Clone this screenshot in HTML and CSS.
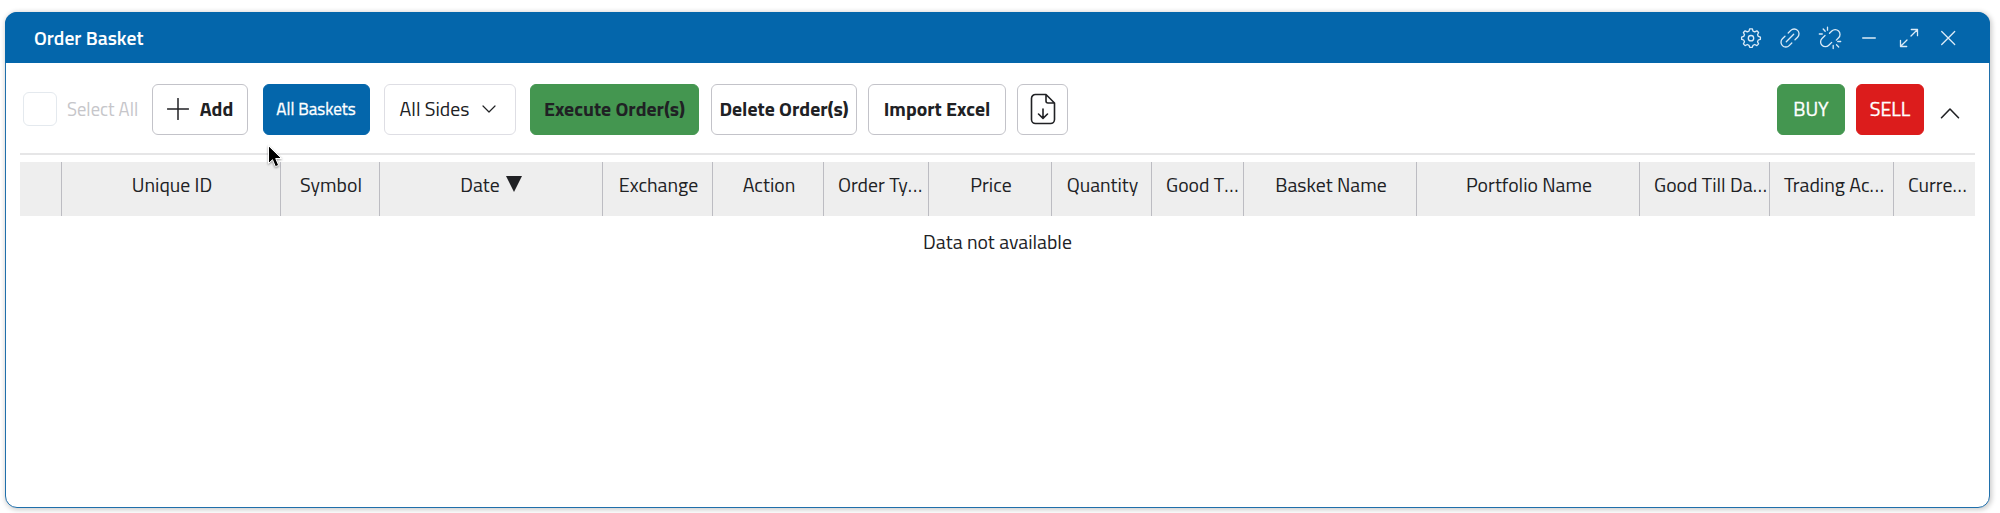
FILE: index.html
```
<!DOCTYPE html>
<html lang="en">
<head>
<meta charset="utf-8">
<title>Order Basket</title>
<link rel="stylesheet" href="styles.css">
</head>
<body>
<section class="window">
  <header class="titlebar">
    <h1 class="title">Order Basket</h1>
    <div class="window-actions">
      <svg class="icon" viewBox="0 0 24 24"><path d="M10.700 2.800h2.600l.7 2.300 1.700.8 2.200-1.100 1.700 1.700-1.100 2.200.8 1.700 2.100.7v2.200l-2.100.7-.8 1.700 1.100 2.200-1.700 1.700-2.200-1.100-1.700.8-.7 2.100h-2.600l-.7-2.100-1.700-.8-2.200 1.100-1.700-1.700 1.100-2.200-.8-1.700-2.100-.7v-2.200l2.100-.7.8-1.700-1.100-2.200 1.700-1.700 2.200 1.100 1.700-.8z"/><circle cx="12" cy="12.200" r="2.700"/></svg>
      <svg class="icon" viewBox="0 0 24 24"><path d="M8.300 15.700l7.400-7.400M10.200 7l2.600-2.600a4.800 4.800 0 0 1 6.800 6.800L17 13.800M7 10.200l-2.600 2.600a4.800 4.800 0 0 0 6.800 6.800l2.600-2.600"/></svg>
      <svg class="icon" viewBox="0 0 24 24"><path d="M11.500 7.300l2.300-2.300a4.800 4.800 0 0 1 6.800 6.800l-2.300 2.300M7 9.500l-3 3a4.800 4.800 0 0 0 6.800 6.800l2.900-2.900M5.200 3l2 2.300M9.500 1.200v3M1.300 8h3M22.700 15.500h-3M18.500 18.800l2.200 2.200M15.200 19.500v3"/></svg>
      <svg class="icon" viewBox="0 0 24 24"><path d="M5.700 12h12.600"/></svg>
      <svg class="icon" viewBox="0 0 24 24"><path d="M14 10l6.300-6.300M14.300 3.500h6.200v6.200M10 14l-6.300 6.300M3.500 14.300v6.200h6.200"/></svg>
      <svg class="icon" viewBox="0 0 24 24"><path d="M5.700 5.500l13 13M18.700 5.500l-13 13"/></svg>
    </div>
  </header>

  <div class="toolbar">
    <label class="select-all"><span class="checkbox"></span><span>Select All</span></label>
    <button class="btn btn-add"><svg class="plus" viewBox="0 0 22 22"><path d="M11 .5v21M.5 11h21"/></svg><span>Add</span></button>
    <button class="btn btn-baskets">All Baskets</button>
    <button class="btn btn-sides"><span>All Sides</span><svg class="chevron" viewBox="0 0 14 8"><path d="M1 1l6 6 6-6"/></svg></button>
    <button class="btn btn-execute">Execute Order(s)</button>
    <button class="btn btn-delete">Delete Order(s)</button>
    <button class="btn btn-import">Import Excel</button>
    <button class="btn btn-export"><svg class="file" viewBox="0 0 26 32"><path d="M16 1.500H5.500a4 4 0 0 0-4 4v21a4 4 0 0 0 4 4h15a4 4 0 0 0 4-4V10zM16 1.500V8a2 2 0 0 0 2 2h6.500M13 16v9M8.500 21l4.500 4.300 4.500-4.300"/></svg></button>
    <div class="trade">
      <button class="btn btn-buy">BUY</button>
      <button class="btn btn-sell">SELL</button>
      <svg class="collapse" viewBox="0 0 20 12"><path d="M1.500 10.700L10 2l8.500 8.700"/></svg>
    </div>
  </div>

  <div class="orders">
    <div class="columns">
      <div class="col"></div>
      <div class="col">Unique ID</div>
      <div class="col">Symbol</div>
      <div class="col date">Date<svg class="sort" viewBox="0 0 16 16"><path d="M0 0h16L8 16z"/></svg></div>
      <div class="col">Exchange</div>
      <div class="col">Action</div>
      <div class="col cut">Order Ty<span class="dots">...</span></div>
      <div class="col">Price</div>
      <div class="col">Quantity</div>
      <div class="col cut">Good T<span class="dots">...</span></div>
      <div class="col">Basket Name</div>
      <div class="col">Portfolio Name</div>
      <div class="col cut">Good Till Da<span class="dots">...</span></div>
      <div class="col cut">Trading Ac<span class="dots">...</span></div>
      <div class="col cut">Curre<span class="dots">...</span></div>
    </div>
    <p class="empty">Data not available</p>
  </div>
  <svg class="cursor" viewBox="0 0 16 24"><path d="M1.500 1v17.500l4-3.800 2.900 7 3.300-1.400-3-6.800h5.500z"/></svg>
</section>
</body>
</html>
```
FILE: styles.css
```
* { box-sizing: border-box; }

body {
  margin: 0;
  height: 513px;
  padding: 12px 10px 5px 5px;
  overflow: hidden;
  background: #fff;
  color: #202124;
  font: 400 19.750px/24px "Titillium Web", Roboto, "Open Sans", sans-serif;
}

.window {
  position: relative;
  height: 496px;
  border: 1px solid #1f6fab;
  border-radius: 12px;
  background: #fff;
  box-shadow: 1px 1px 5px 1px rgba(0, 0, 0, .2);
}

.titlebar {
  display: flex;
  align-items: center;
  justify-content: space-between;
  height: 51px;
  margin: -1px -1px 0;
  padding: 0 30px 0 29px;
  border-radius: 12px 12px 0 0;
  background: #0466ab;
  color: #fff;
}

.title {
  margin: 0;
  font-size: 19.600px;
  font-weight: 600;
}

.window-actions { display: flex; gap: 15.500px; }

svg {
  flex: none;
  fill: none;
  stroke: currentColor;
  stroke-linecap: round;
  stroke-linejoin: round;
}

.icon { width: 24px; height: 24px; stroke-width: 1.300; color: #dcebf7; }

.toolbar {
  display: flex;
  align-items: center;
  height: 92px;
  margin: 0 14px;
  padding: 2px 0 0 3px;
  border-bottom: 2px solid #e6e6e7;
}

.select-all {
  display: flex;
  align-items: center;
  gap: 10px;
  width: 129px;
  color: #c6c6ca;
  font-size: 18.500px;
  white-space: nowrap;
}

.checkbox {
  width: 34px;
  height: 34px;
  border: 1px solid #e4e9ee;
  border-radius: 6px;
}

.btn {
  display: flex;
  flex: none;
  align-items: center;
  justify-content: center;
  height: 51px;
  padding: 0;
  border: 1px solid #c3c3c9;
  border-radius: 6px;
  background: #fff;
  color: #202124;
  font: inherit;
  font-weight: 700;
  white-space: nowrap;
}

.btn-add { width: 96px; gap: 11px; margin-right: 14.500px; }
.plus { width: 22px; height: 22px; stroke-width: 1.500; }

.btn-baskets {
  width: 107px;
  margin-right: 14.500px;
  border-color: #0466ab;
  background: #0466ab;
  color: #fff;
  font-size: 17.100px;
  font-weight: 400;
  -webkit-text-stroke: .300px #fff;
}

.btn-sides {
  width: 132px;
  gap: 13px;
  margin-right: 14px;
  padding-right: 4px;
  border-color: #dedee4;
  font-weight: 400;
}
.chevron { width: 14px; height: 8px; stroke-width: 1.200; }

.btn-execute {
  width: 169px;
  margin-right: 12px;
  border-color: #449650;
  background: #449650;
}
.btn-delete { width: 146px; margin-right: 11px; }
.btn-import { width: 138px; margin-right: 11px; }
.btn-export { width: 51px; }
.file { width: 26px; height: 32px; stroke-width: 1.600; }

.trade {
  display: flex;
  align-items: center;
  gap: 11px;
  margin-left: auto;
  padding-right: 15px;
}
.btn-buy, .btn-sell {
  width: 68px;
  color: #fff;
  font-weight: 400;
  -webkit-text-stroke: .300px #fff;
}
.btn-buy { border-color: #449650; background: #449650; }
.btn-sell { border-color: #dc1c1c; background: #dc1c1c; }
.collapse { width: 20px; height: 12px; margin: 7px 0 0 5px; stroke-width: 1.600; }

.orders { margin: 7px 14px 0; }

.columns {
  display: grid;
  grid-template-columns: 42px 219px 99px 223px 110px 111px 105px 123px 100px 92px 173px 223px 130px 124px 81px;
  height: 54px;
  background: #eee;
}

.col {
  display: flex;
  align-items: center;
  justify-content: center;
  padding: 0 0 8px 2px;
  border-right: 1px solid #bcbcc2;
  white-space: nowrap;
}
.col:last-child { border-right: 0; }
.cut { justify-content: flex-start; padding-left: 14px; }
.dots { letter-spacing: .800px; }
.date { gap: 6px; padding-left: 0; }
.sort { width: 16px; height: 16px; margin-top: -2px; fill: currentColor; stroke: none; }

.empty {
  margin: 14px 0 0;
  text-align: center;
}

.cursor {
  position: absolute;
  top: 132px;
  left: 261px;
  width: 16px;
  height: 24px;
  fill: #000;
  stroke: #fff;
  filter: drop-shadow(0 1px 1px rgba(0, 0, 0, .4));
}
```
